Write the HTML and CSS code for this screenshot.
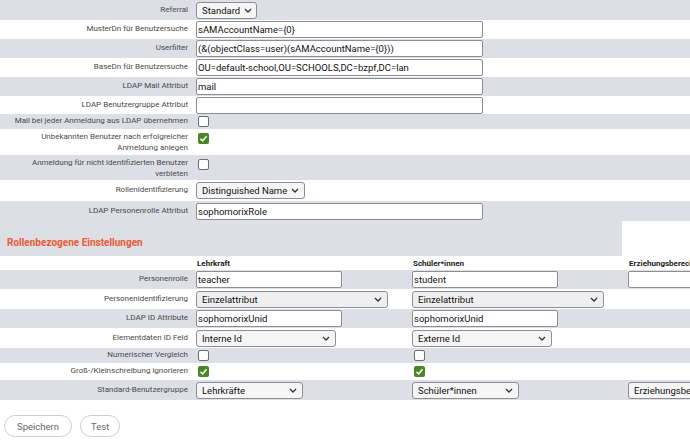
FILE: index.html
```html
<!DOCTYPE html>
<html lang="de">
<head>
<meta charset="utf-8">
<title>LDAP</title>
<link rel="stylesheet" href="styles.css">
</head>
<body>
<div class="page">
<table class="form top">
  <colgroup><col class="c-label"><col></colgroup>
  <tr class="g r20"><td class="lbl">Referral</td><td class="val"><span class="sel w60"><span>Standard</span><svg class="chev" width="8" height="5" viewBox="0 0 8 5"><polyline points="1,1 4,4 7,1"/></svg></span></td></tr>
  <tr class="w r19"><td class="lbl">MusterDn für Benutzersuche</td><td class="val"><input class="txt wl" value="sAMAccountName={0}"></td></tr>
  <tr class="g r19"><td class="lbl">Userfilter</td><td class="val"><input class="txt wl" value="(&amp;(objectClass=user)(sAMAccountName={0}))"></td></tr>
  <tr class="w r19"><td class="lbl">BaseDn für Benutzersuche</td><td class="val"><input class="txt wl" value="OU=default-school,OU=SCHOOLS,DC=bzpf,DC=lan"></td></tr>
  <tr class="g r19"><td class="lbl">LDAP Mail Attribut</td><td class="val"><input class="txt wl" value="mail"></td></tr>
  <tr class="w r18"><td class="lbl">LDAP Benutzergruppe Attribut</td><td class="val"><input class="txt wl" value=""></td></tr>
  <tr class="g r15"><td class="lbl">Mail bei jeder Anmeldung aus LDAP übernehmen</td><td class="val"><span class="cb"></span></td></tr>
  <tr class="w r26 two"><td class="lbl">Unbekannten Benutzer nach erfolgreicher<br>Anmeldung anlegen</td><td class="val"><span class="cb on"><svg width="11" height="11" viewBox="0 0 11 11"><polyline points="2.5,5.8 4.6,7.8 8.6,3.2"/></svg></span></td></tr>
  <tr class="g r25 two"><td class="lbl">Anmeldung für nicht identifizierten Benutzer<br>verbieten</td><td class="val"><span class="cb"></span></td></tr>
  <tr class="w r21"><td class="lbl">Rollenidentifizierung</td><td class="val"><span class="sel w108"><span>Distinguished Name</span><svg class="chev" width="8" height="5" viewBox="0 0 8 5"><polyline points="1,1 4,4 7,1"/></svg></span></td></tr>
  <tr class="g r20"><td class="lbl">LDAP Personenrolle Attribut</td><td class="val"><input class="txt wl" value="sophomorixRole"></td></tr>
</table>

<table class="form roles">
  <colgroup><col class="c-label"><col class="c-role"><col class="c-role"><col class="c-role"></colgroup>
  <tr class="r35"><td class="heading" colspan="3">Rollenbezogene Einstellungen</td></tr>
  <tr class="w r14 head"><td></td><td>Lehrkraft</td><td>Schüler*innen</td><td>Erziehungsberechtigte</td></tr>
  <tr class="g r19"><td class="lbl">Personenrolle</td><td class="val"><input class="txt ws" value="teacher"></td><td class="val"><input class="txt ws" value="student"></td><td class="val"><input class="txt ws" value=""></td></tr>
  <tr class="w r20"><td class="lbl">Personenidentifizierung</td><td class="val"><span class="sel w191 grey"><span>Einzelattribut</span><svg class="chev" width="8" height="5" viewBox="0 0 8 5"><polyline points="1,1 4,4 7,1"/></svg></span></td><td class="val"><span class="sel w191 grey"><span>Einzelattribut</span><svg class="chev" width="8" height="5" viewBox="0 0 8 5"><polyline points="1,1 4,4 7,1"/></svg></span></td><td></td></tr>
  <tr class="g r19"><td class="lbl">LDAP ID Attribute</td><td class="val"><input class="txt ws" value="sophomorixUnid"></td><td class="val"><input class="txt ws" value="sophomorixUnid"></td><td></td></tr>
  <tr class="w r20"><td class="lbl">Elementdaten ID Feld</td><td class="val"><span class="sel w139"><span>Interne Id</span><svg class="chev" width="8" height="5" viewBox="0 0 8 5"><polyline points="1,1 4,4 7,1"/></svg></span></td><td class="val"><span class="sel w139"><span>Externe Id</span><svg class="chev" width="8" height="5" viewBox="0 0 8 5"><polyline points="1,1 4,4 7,1"/></svg></span></td><td></td></tr>
  <tr class="g r15"><td class="lbl">Numerischer Vergleich</td><td class="val"><span class="cb"></span></td><td class="val"><span class="cb"></span></td><td></td></tr>
  <tr class="w r17"><td class="lbl">Groß-/Kleinschreibung ignorieren</td><td class="val"><span class="cb on"><svg width="11" height="11" viewBox="0 0 11 11"><polyline points="2.5,5.8 4.6,7.8 8.6,3.2"/></svg></span></td><td class="val"><span class="cb on"><svg width="11" height="11" viewBox="0 0 11 11"><polyline points="2.5,5.8 4.6,7.8 8.6,3.2"/></svg></span></td><td></td></tr>
  <tr class="g r20"><td class="lbl">Standard-Benutzergruppe</td><td class="val"><span class="sel w106"><span>Lehrkräfte</span><svg class="chev" width="8" height="5" viewBox="0 0 8 5"><polyline points="1,1 4,4 7,1"/></svg></span></td><td class="val"><span class="sel w106"><span>Schüler*innen</span><svg class="chev" width="8" height="5" viewBox="0 0 8 5"><polyline points="1,1 4,4 7,1"/></svg></span></td><td class="val"><span class="sel w106"><span>Erziehungsberechtigte</span><svg class="chev" width="8" height="5" viewBox="0 0 8 5"><polyline points="1,1 4,4 7,1"/></svg></span></td></tr>
</table>

<div class="actions">
  <button class="pill">Speichern</button>
  <button class="pill test">Test</button>
</div>
</div>
</body>
</html>
```

FILE: styles.css
```css
html, body {
  margin: 0;
  padding: 0;
  background: #fff;
  overflow: hidden;
}
body {
  width: 690px;
  height: 440px;
  font-family: Roboto, "Noto Sans", sans-serif;
  color: #222;
}
.page {
  width: 690px;
}
.form {
  border-collapse: collapse;
  border-spacing: 0;
  table-layout: fixed;
}
.form.top { width: 690px; }
.form.roles { width: 838px; }
.c-label { width: 190px; }
.c-role { width: 216px; }
.form td {
  padding: 0;
  vertical-align: middle;
}
tr.g { background: #dcdfe6; }
tr.w { background: #fff; }
.r14 { height: 14px; }
.r15 { height: 15px; }
.r16 { height: 16px; }
.r17 { height: 17px; }
.r18 { height: 18px; }
.r19 { height: 19px; }
.r20 { height: 20px; }
.r21 { height: 21px; }
.r25 { height: 25px; }
.r26 { height: 26px; }
.r35 { height: 35px; }
.lbl {
  text-align: right;
  padding-right: 2px !important;
  font-size: 8px;
  line-height: 10.5px;
  color: #4a4a4a;
  white-space: nowrap;
}
.val {
  padding-left: 6px !important;
  font-size: 0;
  line-height: 0;
}
tr.two td { vertical-align: top; }
tr.two .lbl { padding-top: 3px !important; }
tr.two .val { padding-top: 4px !important; }

.txt {
  box-sizing: border-box;
  height: 17px;
  margin: 0;
  padding: 0 1px;
  border: 1px solid #8d8d95;
  border-radius: 2px;
  background: #fff;
  font-family: Roboto, "Noto Sans", sans-serif;
  font-size: 9.5px;
  color: #111;
  outline: none;
  vertical-align: middle;
}
.wl { width: 287px; }
.ws { width: 146px; }

.sel {
  box-sizing: border-box;
  display: inline-flex;
  align-items: center;
  justify-content: space-between;
  height: 17px;
  padding: 0 5px 0 5px;
  border: 1px solid #8d8d95;
  border-radius: 3px;
  background: #f5f5f6;
  font-size: 9.5px;
  line-height: 15px;
  color: #111;
  vertical-align: middle;
  white-space: nowrap;
  overflow: hidden;
}
.sel.grey { background: #efeff1; }
.sel .chev {
  flex: none;
  margin-left: 4px;
}
.chev polyline {
  fill: none;
  stroke: #333;
  stroke-width: 1.3;
}
.w60 { width: 61px; }
.w108 { width: 109px; }
.w191 { width: 192px; }
.w139 { width: 140px; }
.w106 { width: 107px; }

.cb {
  box-sizing: border-box;
  display: inline-block;
  width: 11px;
  height: 11px;
  margin-left: 2px;
  border: 1.5px solid #6d6d75;
  border-radius: 2px;
  background: #fff;
  vertical-align: middle;
}
.cb.on {
  border: none;
  background: #45891f;
}
.cb svg { display: block; }
.cb polyline {
  fill: none;
  stroke: #fff;
  stroke-width: 1.6;
}

.heading {
  background: #dcdfe6;
  padding: 8px 0 0 7px !important;
  font-size: 10px;
  font-weight: 700;
  color: #f2582a;
}
.head td {
  padding-left: 7px !important;
  font-size: 8px;
  font-weight: 700;
  color: #222;
  white-space: nowrap;
  overflow: hidden;
}

.actions {
  display: flex;
  gap: 8px;
  padding: 15px 0 0 4px;
}
.pill {
  height: 22px;
  padding: 0 12px;
  border: 1px solid #cfcfd3;
  border-radius: 11px;
  background: #fff;
  font-family: Roboto, "Noto Sans", sans-serif;
  font-size: 9.5px;
  color: #666;
}
.pill.test { padding: 0 10px; }
```
